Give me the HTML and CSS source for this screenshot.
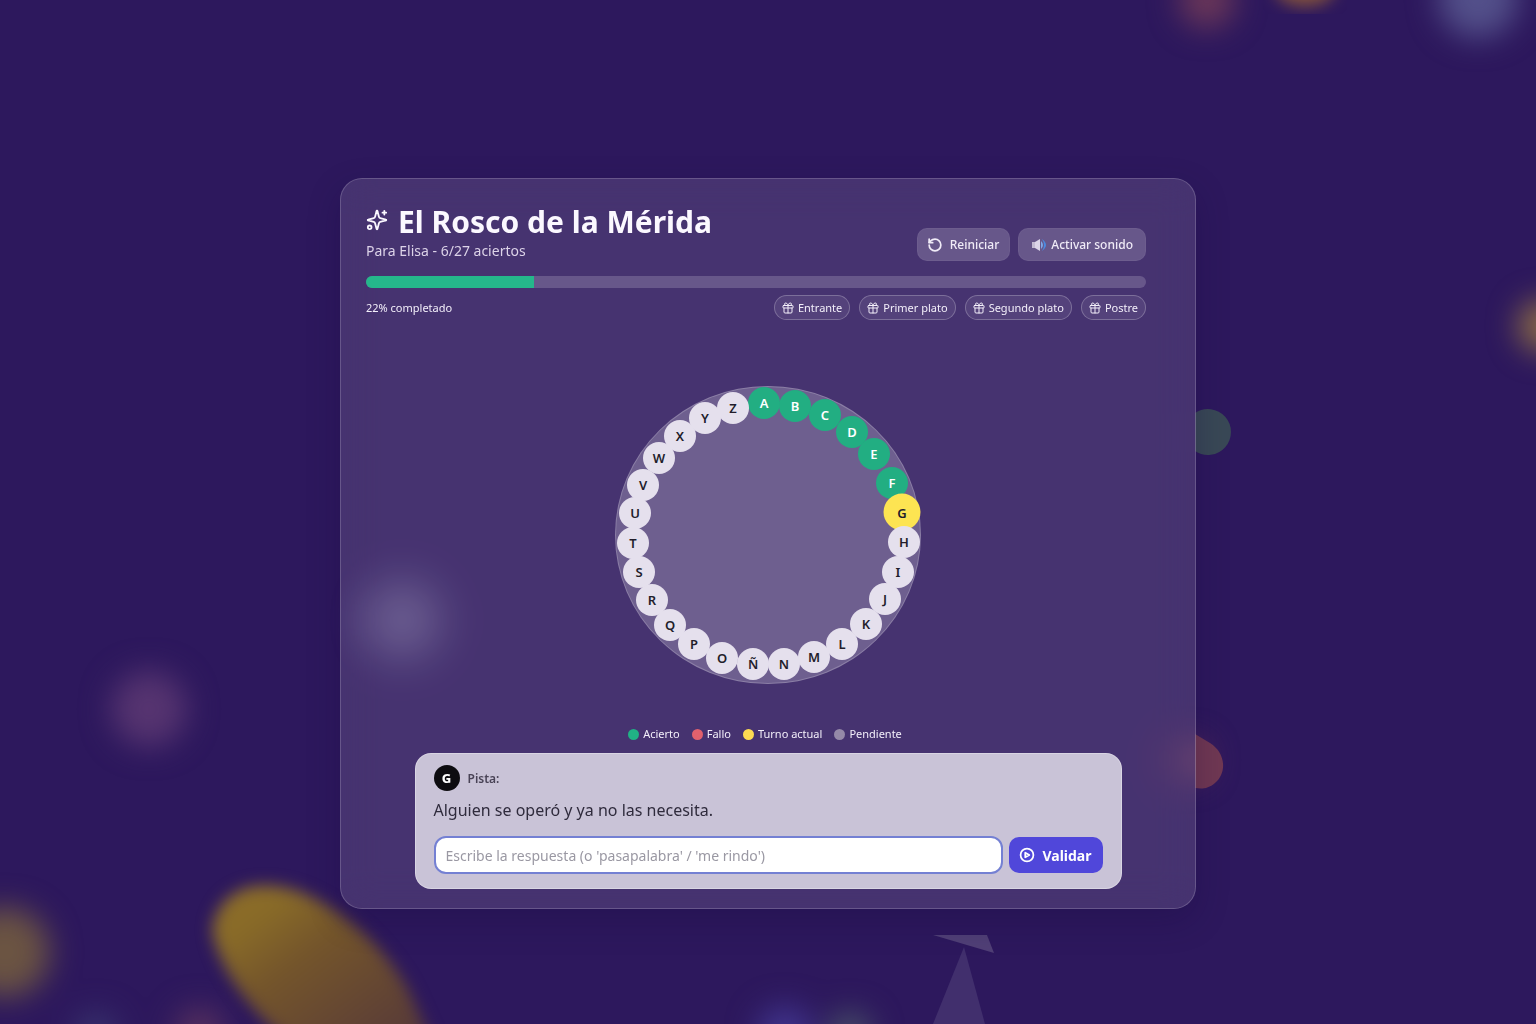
FILE: index.html
```html
<!DOCTYPE html>
<html lang="es">
<head>
    <meta charset="UTF-8">
    <meta name="viewport" content="width=device-width, initial-scale=1.0">
    <title>El Rosco de la Mérida</title>
    <link rel="stylesheet" href="styles.css">
</head>
<body>
    <svg class="confetti" viewBox="0 0 1536 1024" preserveAspectRatio="xMidYMid slice" aria-hidden="true">
        <defs>
            <filter id="soft" x="-20%" y="-20%" width="140%" height="140%" color-interpolation-filters="sRGB"><feGaussianBlur stdDeviation="15"/></filter>
            <filter id="edge" x="-20%" y="-20%" width="140%" height="140%" color-interpolation-filters="sRGB"><feGaussianBlur stdDeviation="8"/></filter>
            <linearGradient id="gold" x1="0" y1="0" x2="1" y2="1">
                <stop offset="0" stop-color="#907028"/>
                <stop offset="0.2" stop-color="#886a28"/>
                <stop offset="0.4" stop-color="#74552b"/>
                <stop offset="1" stop-color="#50333c"/>
            </linearGradient>
        </defs>
        <g filter="url(#soft)">
            <circle cx="1207" cy="0" r="28" fill="#6b3758"/>
            <circle cx="1478" cy="-2" r="40" fill="#53508a"/>
            <circle cx="1544" cy="326" r="26" fill="#8b6b45"/>
            <circle cx="149" cy="709" r="38" fill="#563470"/>
            <circle cx="5" cy="952" r="45" fill="#6b5442"/>
            <circle cx="402" cy="620" r="38" fill="#5a4c84"/>
            <circle cx="200" cy="1032" r="25" fill="#56305e"/>
            <circle cx="96" cy="1034" r="22" fill="#38336e"/>
            <circle cx="785" cy="1034" r="28" fill="#40348c"/>
            <circle cx="850" cy="1034" r="22" fill="#485068"/>
            <circle cx="1188" cy="760" r="20" fill="#5f2c58"/>
        </g>
        <ellipse cx="1305" cy="-12" rx="30" ry="18" fill="#85533c" filter="url(#edge)"/>
        <path d="M212 930C218 890 255 876 300 892C350 912 390 955 410 993L440 1060H310C275 1035 222 985 212 930Z" fill="url(#gold)" filter="url(#edge)"/>
        <path d="M1195 413A23 23 0 1 1 1195 451Z" fill="#394856"/>
        <path d="M1195 734L1210 743C1226 753 1227 773 1215 783C1208 789 1202 789 1195 788Z" fill="#703853"/>
        <path d="M933 935H987L994 953Z" fill="#503f76"/>
        <path d="M964 947L985 1024H933Z" fill="#412f6d"/>
    </svg>

    <main class="card">
        <header class="top">
            <div class="heading">
                <h1>
                    <svg class="sparkles" viewBox="0 0 24 24" aria-hidden="true">
                        <path d="M9.900 15.500A2 2 0 0 0 8.500 14.100l-6.100-1.600a.5.5 0 0 1 0-1L8.500 9.900A2 2 0 0 0 9.900 8.500l1.600-6.100a.5.5 0 0 1 1 0l1.600 6.100a2 2 0 0 0 1.400 1.400l6.100 1.600a.5.5 0 0 1 0 1l-6.100 1.600a2 2 0 0 0-1.400 1.400l-1.600 6.100a.5.5 0 0 1-1 0z"/>
                        <path d="M20 2v4M22 4h-4"/>
                        <circle cx="4" cy="20" r="2"/>
                    </svg>
                    El Rosco de la Mérida
                </h1>
                <p>Para Elisa - 6/27 aciertos</p>
            </div>
            <div class="actions">
                <button type="button" class="btn">
                    <svg class="icon" viewBox="0 0 24 24" aria-hidden="true">
                        <path d="M2 12a10 10 0 1 0 10-10 11 11 0 0 0-7.500 3L2 7.500"/>
                        <path d="M2 2v6h6"/>
                    </svg>
                    Reiniciar
                </button>
                <button type="button" class="btn btn-sound">
                    <svg class="speaker" viewBox="0 0 16 16" aria-hidden="true">
                        <path d="M1 5h4v6H1z" fill="#c4bbd3"/>
                        <path d="M4 5l5-3v12l-5-3z" fill="#dcd5e8"/>
                        <path d="M10 4q4 4 0 8z" fill="#7fa9e8"/>
                        <path d="M11 2q8 6 0 12q4-6 0-12z" fill="#4c8ae0"/>
                    </svg>
                    Activar sonido
                </button>
            </div>
        </header>

        <div class="progress" role="progressbar" aria-valuenow="22" aria-valuemin="0" aria-valuemax="100" aria-label="Progreso">
            <div class="progress-fill" style="width: 21.5%"></div>
        </div>

        <div class="status">
            <span>22% completado</span>
            <ul class="courses">
                <li><svg class="gift" viewBox="0 0 24 24" aria-hidden="true"><use href="#gift"/></svg>Entrante</li>
                <li><svg class="gift" viewBox="0 0 24 24" aria-hidden="true"><use href="#gift"/></svg>Primer plato</li>
                <li><svg class="gift" viewBox="0 0 24 24" aria-hidden="true"><use href="#gift"/></svg>Segundo plato</li>
                <li><svg class="gift" viewBox="0 0 24 24" aria-hidden="true"><use href="#gift"/></svg>Postre</li>
            </ul>
        </div>

        <ol class="wheel" id="wheel"></ol>

        <ul class="legend">
            <li><span class="dot dot-ok"></span>Acierto</li>
            <li><span class="dot dot-fail"></span>Fallo</li>
            <li><span class="dot dot-current"></span>Turno actual</li>
            <li><span class="dot dot-pending"></span>Pendiente</li>
        </ul>

        <section class="clue">
            <div class="clue-head">
                <span class="badge">G</span>
                <label for="answer">Pista:</label>
            </div>
            <p class="clue-text">Alguien se operó y ya no las necesita.</p>
            <form class="answer">
                <input type="text" id="answer" placeholder="Escribe la respuesta (o 'pasapalabra' / 'me rindo')">
                <button type="button" class="btn-submit">
                    <svg class="icon" viewBox="0 0 24 24" aria-hidden="true">
                        <circle cx="12" cy="12" r="11"/>
                        <path d="M9 8l7 4-7 4z"/>
                    </svg>
                    Validar
                </button>
            </form>
        </section>
    </main>

    <svg class="sprite" aria-hidden="true">
        <symbol id="gift" viewBox="0 0 24 24">
            <rect x="2" y="7" width="20" height="5" rx="1"/>
            <path d="M12 7v15M4 12v8a2 2 0 0 0 2 2h12a2 2 0 0 0 2-2v-8"/>
            <path d="M7.500 7a2.500 2.500 0 0 1 0-5C11 2 12 7 12 7s1-5 4.500-5a2.500 2.500 0 0 1 0 5"/>
        </symbol>
    </svg>

    <script src="script.js"></script>
</body>
</html>
```

FILE: styles.css
```css
* {
    box-sizing: border-box;
}
body {
    margin: 0;
    min-height: 100vh;
    padding: 178px 24px 24px;
    font-family: 'Noto Sans', 'Open Sans', sans-serif;
    background: #2d185d;
    color: #f3effa;
    overflow: hidden;
}
h1, p, ul, ol {
    margin: 0;
    padding: 0;
}
ul, ol {
    list-style: none;
}
button, input {
    font-family: inherit;
}
svg {
    fill: none;
    stroke: currentColor;
    stroke-width: 2;
    stroke-linecap: round;
    stroke-linejoin: round;
    flex-shrink: 0;
}
.confetti {
    position: fixed;
    inset: 0;
    width: 100%;
    height: 100%;
    stroke: none;
    z-index: -1;
}
.sprite {
    display: none;
}
.card {
    max-width: 856px;
    margin: 0 auto;
    padding: 24px 25px 19px;
    border: 1px solid rgba(255, 255, 255, 0.18);
    border-radius: 22px;
    background: rgba(255, 250, 255, 0.12);
    box-shadow: 0 12px 32px rgba(20, 8, 60, 0.25);
    backdrop-filter: blur(18px);
}

/* Header */
.top, .progress, .status {
    max-width: 780px;
}
.top {
    display: flex;
    justify-content: space-between;
    align-items: flex-end;
}
.heading h1 {
    display: flex;
    align-items: center;
    gap: 10px;
    font-size: 30px;
    line-height: 38px;
    font-weight: 700;
    color: #fbf8ff;
}
.heading p {
    font-size: 14px;
    line-height: 20px;
    color: #dcd3e8;
}
.sparkles {
    width: 22px;
    height: 22px;
    margin-bottom: 4px;
}
.actions {
    display: flex;
    gap: 8px;
}
.btn {
    display: flex;
    align-items: center;
    gap: 8px;
    height: 33px;
    padding: 0 10px;
    border: 1px solid rgba(255, 255, 255, 0.04);
    border-radius: 10px;
    background: rgba(255, 255, 255, 0.18);
    color: #f0ebf7;
    font-size: 12px;
    font-weight: 500;
    cursor: pointer;
}
.btn-sound {
    gap: 4px;
    padding: 0 12px;
}
.icon {
    width: 14px;
    height: 14px;
    stroke-width: 3;
    overflow: visible;
}
.speaker {
    width: 16px;
    height: 16px;
    stroke: none;
}
.progress {
    height: 12px;
    margin-top: 15px;
    border-radius: 6px;
    background: rgba(255, 255, 255, 0.18);
    overflow: hidden;
}
.progress-fill {
    height: 100%;
    background: #25b78b;
}
.status {
    display: flex;
    justify-content: space-between;
    align-items: center;
    margin-top: 7px;
    font-size: 11px;
}
.courses {
    display: flex;
    gap: 9px;
}
.courses li {
    display: flex;
    align-items: center;
    gap: 4px;
    height: 25px;
    padding: 0 7px;
    border: 1px solid rgba(255, 255, 255, 0.24);
    border-radius: 13px;
    background: rgba(255, 255, 255, 0.08);
}
.gift {
    width: 12px;
    height: 12px;
}

/* Letter wheel */
.wheel {
    position: relative;
    width: 306px;
    height: 298px;
    margin: 66px auto 42px;
    border: 1px solid rgba(255, 255, 255, 0.2);
    border-radius: 50%;
    background: rgba(255, 255, 255, 0.22);
}
.letter {
    position: absolute;
    display: flex;
    align-items: center;
    justify-content: center;
    width: 32px;
    height: 32px;
    border-radius: 50%;
    transform: translate(-50%, -50%);
    background: #e5e0ed;
    color: #221d2b;
    font-size: 13px;
    font-weight: 600;
}
.letter.ok {
    background: #22ae82;
    color: #fff;
}
.letter.current {
    width: 37px;
    height: 37px;
    background: #fde452;
}

.legend {
    display: flex;
    justify-content: center;
    gap: 12px;
    margin-right: 6px;
    font-size: 11px;
    line-height: 16px;
}
.legend li {
    display: flex;
    align-items: center;
    gap: 4px;
}
.dot {
    width: 11px;
    height: 11px;
    border-radius: 50%;
}
.dot-ok {
    background: #21b185;
}
.dot-fail {
    background: #e2616d;
}
.dot-current {
    background: #fddb52;
}
.dot-pending {
    background: #9589a8;
}

/* Clue panel */
.clue {
    max-width: 707px;
    margin: 11px auto 0;
    padding: 11px 18px 14px;
    border: 1px solid rgba(255, 255, 255, 0.3);
    border-radius: 16px;
    background: #c9c3d7;
    color: #2f2b3c;
}
.clue-head {
    display: flex;
    align-items: center;
    gap: 8px;
    font-size: 12px;
    font-weight: 600;
    color: #494356;
}
.badge {
    display: flex;
    align-items: center;
    justify-content: center;
    width: 26px;
    height: 26px;
    border-radius: 50%;
    background: #0d0c10;
    color: #fff;
    font-size: 13px;
    font-weight: 800;
}
.clue-text {
    margin: 7px 0 13px;
    font-size: 16px;
    line-height: 25px;
}
.answer {
    display: flex;
    align-items: center;
    gap: 6px;
}
.answer input {
    flex: 1;
    min-width: 0;
    height: 38px;
    padding: 0 10px;
    border: 2px solid #7480d3;
    border-radius: 12px;
    background: #fff;
    color: #2f2b3c;
    font-size: 14px;
    outline: none;
}
.answer input::placeholder {
    color: #9a98a3;
}
.btn-submit {
    display: flex;
    align-items: center;
    gap: 8px;
    height: 36px;
    padding: 0 11px;
    border: none;
    border-radius: 10px;
    background: #5047da;
    color: #fff;
    font-size: 14px;
    font-weight: 700;
    cursor: pointer;
}
```

FILE: script.js
```js
// letter, centre x, centre y (px inside the wheel), state
const letters = [
    ['A', 148, 16, 'ok'], ['B', 179, 19, 'ok'], ['C', 209, 28, 'ok'],
    ['D', 236, 45, 'ok'], ['E', 258, 67, 'ok'], ['F', 276, 96, 'ok'],
    ['G', 286, 125, 'current'], ['H', 288, 155], ['I', 282, 185],
    ['J', 269, 212], ['K', 250, 237], ['L', 226, 257],
    ['M', 198, 270], ['N', 168, 277], ['Ñ', 137, 277],
    ['O', 106, 271], ['P', 78, 257], ['Q', 54, 238],
    ['R', 36, 213], ['S', 23, 185], ['T', 17, 156],
    ['U', 19, 126], ['V', 27, 98], ['W', 43, 71],
    ['X', 64, 49], ['Y', 89, 31], ['Z', 117, 21]
];

const wheel = document.getElementById('wheel');

letters.forEach(([name, x, y, state]) => {
    const item = document.createElement('li');
    item.className = state ? `letter ${state}` : 'letter';
    item.textContent = name;
    item.style.left = `${x}px`;
    item.style.top = `${y}px`;
    wheel.appendChild(item);
});
```
